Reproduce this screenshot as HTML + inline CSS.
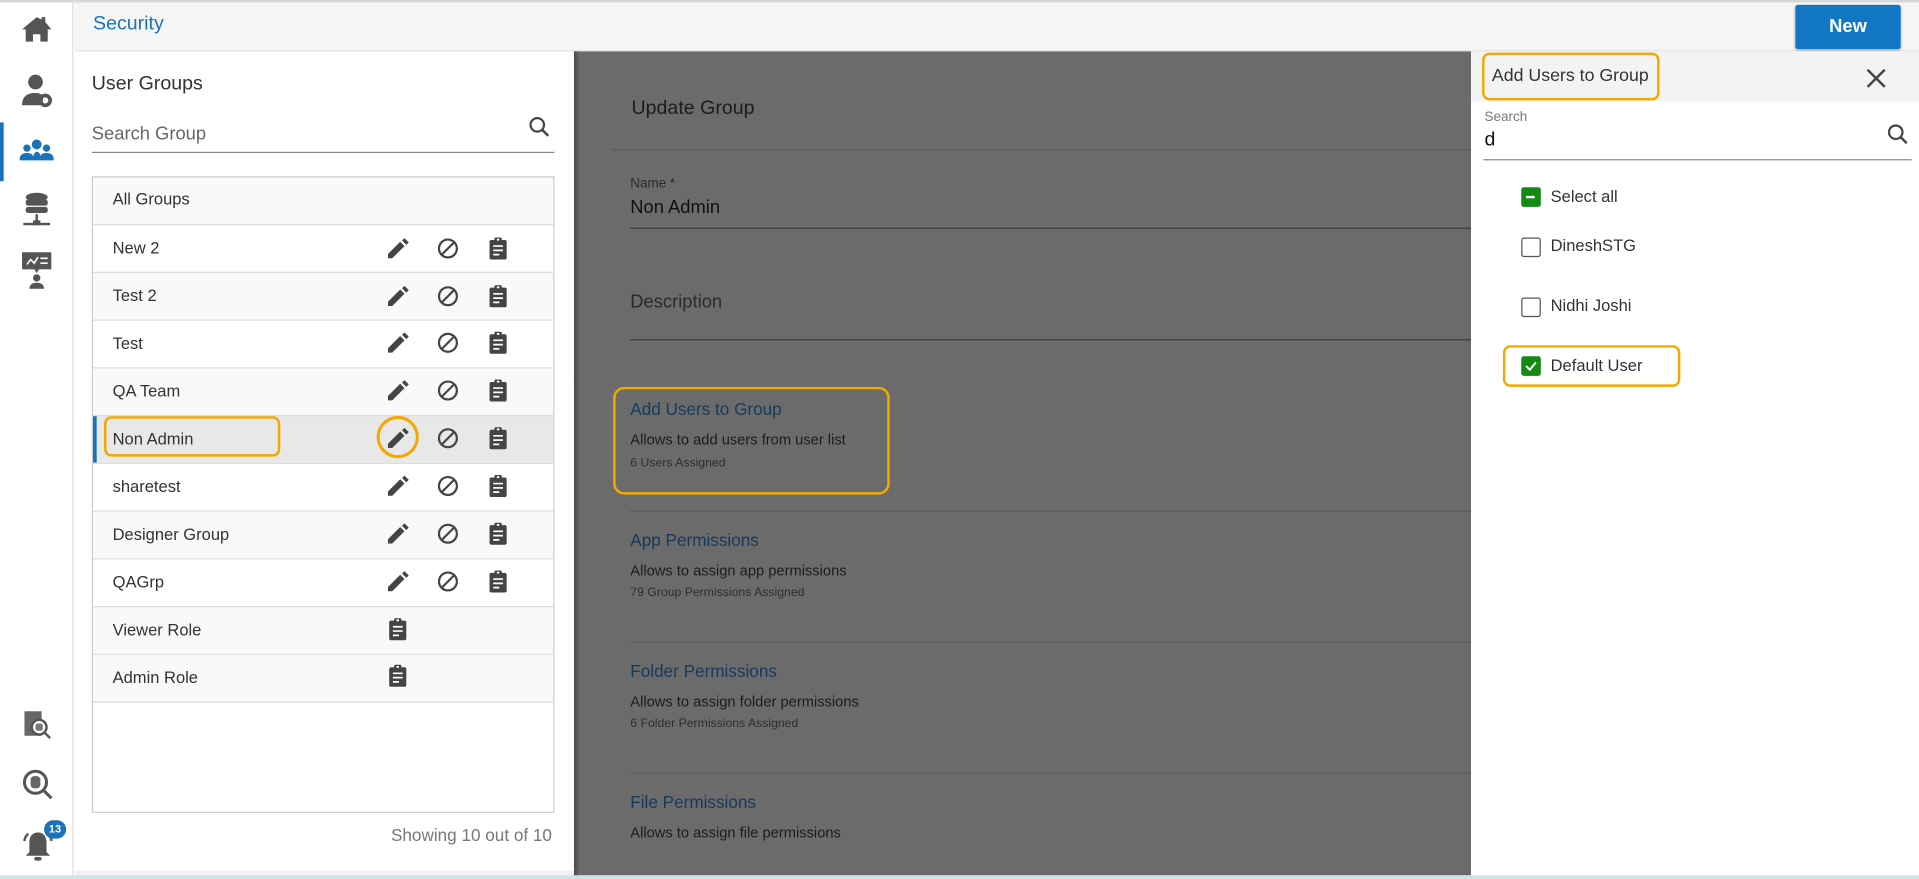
<!DOCTYPE html>
<html><head><meta charset="utf-8"><style>
*{box-sizing:border-box;margin:0;padding:0}
html,body{width:1919px;height:879px;overflow:hidden;background:#fff;font-family:"Liberation Sans",sans-serif}
#root{position:absolute;left:0;top:0;width:1568px;height:718px;transform:scale(1.22385,1.2242);transform-origin:0 0;background:#fff}
.a{position:absolute}
.t{position:absolute;white-space:nowrap}
.row{position:absolute;left:0;width:377px;height:39px;border-top:1px solid #ddd;font-size:13.5px;color:#333}
.row span{position:absolute;left:16px;top:11px}
.cb{position:absolute;left:1243px;width:16px;height:16px;border:1.5px solid #555;border-radius:2px;background:#fff}
.lbl{position:absolute;left:1267px;font-size:13.5px;color:#333}
.ob{position:absolute;border:2.5px solid #f2a900;border-radius:6px}
</style></head><body><div id="root">
<div class="a" style="left:0;top:0;width:1568px;height:2px;background:#d8d8d8"></div>
<div class="a" style="left:0;top:2px;width:60px;height:713px;background:#fff;border-right:1px solid #ddd"></div>
<div class="a" style="left:0;top:100px;width:3px;height:48px;background:#1a73b8"></div>
<svg class="a" style="left:17px;top:12px" width="26" height="24" viewBox="0 0 26 24"><path d="M13 2L1 12h3v10h6v-6h6v6h6V12h3L20 6V2h-3v2z" fill="#555"/></svg>
<svg class="a" style="left:17px;top:60px" width="26" height="28" viewBox="0 0 26 28"><circle cx="12" cy="7" r="6" fill="#555"/><path d="M1 26c0-7 4-10 11-10 3 0 5 1 6 2v8z" fill="#555"/><circle cx="20" cy="22" r="4" fill="none" stroke="#555" stroke-width="3"/></svg>
<svg class="a" style="left:16px;top:113px" width="28" height="22" viewBox="0 0 28 22"><circle cx="14" cy="5" r="4" fill="#1a73b8"/><circle cx="6" cy="8" r="3" fill="#1a73b8"/><circle cx="22" cy="8" r="3" fill="#1a73b8"/><path d="M0 18c0-5 3-6 6-6s5 1 5 3c1-3 2-4 3-4s3 1 3 4c0-2 2-3 5-3s6 1 6 6z" fill="#1a73b8"/></svg>
<svg class="a" style="left:19px;top:157px" width="22" height="30" viewBox="0 0 22 30"><ellipse cx="11" cy="4" rx="9" ry="3.5" fill="#555"/><rect x="2" y="6" width="18" height="5" rx="2" fill="#555"/><rect x="2" y="12" width="18" height="5" rx="2" fill="#555"/><rect x="10" y="18" width="2" height="6" fill="#555"/><rect x="0" y="25" width="22" height="2" fill="#555"/><rect x="8" y="23" width="6" height="4" fill="#555"/></svg>
<svg class="a" style="left:18px;top:206px" width="24" height="30" viewBox="0 0 24 30"><rect x="0" y="0" width="24" height="14" fill="#555"/><path d="M4 10l3-4 3 3 3-5M15 5h6M15 9h6" stroke="#fff" stroke-width="1.3" fill="none"/><path d="M10 14l2 3 2-3z" fill="#555"/><circle cx="12" cy="21" r="3" fill="#555"/><path d="M6 30c0-4 3-5 6-5s6 1 6 5z" fill="#555"/></svg>
<svg class="a" style="left:18px;top:580px" width="24" height="26" viewBox="0 0 24 26"><rect x="2" y="1" width="14" height="20" fill="#666"/><circle cx="14" cy="14" r="6" fill="#fff" stroke="#555" stroke-width="2"/><path d="M18 18l5 5" stroke="#555" stroke-width="2"/><rect x="11" y="11" width="6" height="6" rx="2" fill="#777"/></svg>
<svg class="a" style="left:18px;top:628px" width="26" height="26" viewBox="0 0 26 26"><circle cx="11" cy="11" r="9" fill="none" stroke="#555" stroke-width="2.5"/><path d="M17 17l7 7" stroke="#555" stroke-width="2.5"/><rect x="7" y="6" width="8" height="10" rx="3" fill="#666"/></svg>
<svg class="a" style="left:17px;top:677px" width="28" height="28" viewBox="0 0 28 28"><path d="M14 3c-5 0-7 4-7 8v8l-3 3h20l-3-3v-8c0-4-2-8-7-8z" fill="#555"/><rect x="11" y="23" width="6" height="3" rx="1.5" fill="#555"/><path d="M3 10c0-3 2-5 3-6M25 10c0-3-2-5-3-6" stroke="#555" stroke-width="2" fill="none"/></svg>
<div class="a" style="left:36px;top:670px;width:18px;height:15px;border-radius:8px;background:#1a73b8;color:#fff;font-size:9px;font-weight:bold;text-align:center;line-height:15px">13</div>
<div class="a" style="left:61px;top:2px;width:1507px;height:40px;background:#f5f5f5;border-bottom:1px solid #e2e2e2"></div>
<div class="t" style="left:76px;top:11px;font-size:16px;color:#1a73b8">Security</div>
<div class="a" style="left:1467px;top:4px;width:86px;height:36px;background:#1177c4;border-radius:2px;color:#fff;font-weight:bold;font-size:15px;text-align:center;line-height:36px;box-shadow:0 1px 2px rgba(0,0,0,.3)">New</div>
<div class="t" style="left:75px;top:60px;font-size:16px;color:#333">User Groups</div>
<div class="t" style="left:75px;top:101px;font-size:15px;color:#666">Search Group</div>
<svg class="a" style="left:432px;top:95px" width="18" height="18" viewBox="0 0 18 18"><circle cx="7" cy="7" r="5.5" fill="none" stroke="#444" stroke-width="1.8"/><path d="M11 11l5 5" stroke="#444" stroke-width="2"/></svg>
<div class="a" style="left:75px;top:124px;width:378px;height:1px;background:#888"></div>
<div class="a" style="left:75px;top:144px;width:378px;height:520px;border:1px solid #ccc;background:#fff;overflow:hidden">
 <div class="row" style="top:-1px;background:#f9f9f9;border-top:none"><span>All Groups</span></div>
 <div class="row" style="top:38px;background:#fff"><span>New 2</span></div>
 <div class="row" style="top:77px;background:#f9f9f9"><span>Test 2</span></div>
 <div class="row" style="top:116px;background:#fff"><span>Test</span></div>
 <div class="row" style="top:155px;background:#f9f9f9"><span>QA Team</span></div>
 <div class="row" style="top:194px;background:#e8e8e8"><span>Non Admin</span><div class="a" style="left:0;top:0;width:3px;height:39px;background:#1a73b8"></div></div>
 <div class="row" style="top:233px;background:#fff"><span>sharetest</span></div>
 <div class="row" style="top:272px;background:#f9f9f9"><span>Designer Group</span></div>
 <div class="row" style="top:311px;background:#fff"><span>QAGrp</span></div>
 <div class="row" style="top:350px;background:#f9f9f9"><span>Viewer Role</span></div>
 <div class="row" style="top:389px;background:#f9f9f9"><span>Admin Role</span></div>
 <div class="row" style="top:428px;background:#fff;height:100px"></div>
</div>
<svg class="a" style="left:0;top:0" width="470" height="600">
 <defs>
  <g id="pen"><path d="M-8 8l0-3.5 10-10 3.5 3.5-10 10z M3.5-6.5l2-2 3.5 3.5-2 2z" fill="#444"/></g>
  <g id="ban"><circle r="7.3" fill="none" stroke="#444" stroke-width="1.8"/><path d="M-5 5L5-5" stroke="#444" stroke-width="1.8"/></g>
  <g id="clip"><rect x="-7" y="-7" width="14" height="16" rx="1.5" fill="#444"/><rect x="-3" y="-9" width="6" height="4" rx="1" fill="#444"/><rect x="-1" y="-8" width="2" height="1.5" fill="#fff"/><path d="M-4-2h8M-4 1.5h8M-4 5h5" stroke="#fff" stroke-width="1.4"/></g>
 </defs>
 <use href="#pen" x="325" y="203"/><use href="#ban" x="366" y="203"/><use href="#clip" x="407" y="203"/>
 <use href="#pen" x="325" y="242"/><use href="#ban" x="366" y="242"/><use href="#clip" x="407" y="242"/>
 <use href="#pen" x="325" y="280"/><use href="#ban" x="366" y="280"/><use href="#clip" x="407" y="280"/>
 <use href="#pen" x="325" y="319"/><use href="#ban" x="366" y="319"/><use href="#clip" x="407" y="319"/>
 <use href="#pen" x="325" y="358"/><use href="#ban" x="366" y="358"/><use href="#clip" x="407" y="358"/>
 <use href="#pen" x="325" y="397"/><use href="#ban" x="366" y="397"/><use href="#clip" x="407" y="397"/>
 <use href="#pen" x="325" y="436"/><use href="#ban" x="366" y="436"/><use href="#clip" x="407" y="436"/>
 <use href="#pen" x="325" y="475"/><use href="#ban" x="366" y="475"/><use href="#clip" x="407" y="475"/>
 <use href="#clip" x="325" y="514"/>
 <use href="#clip" x="325" y="552"/>
 <circle cx="325" cy="357" r="16" fill="none" stroke="#f2a900" stroke-width="2.5"/>
</svg>
<div class="ob" style="left:85px;top:340px;width:144px;height:33px"></div>
<div class="t" style="right:1117px;top:674px;font-size:14px;color:#777">Showing 10 out of 10</div>
<div class="a" style="left:61px;top:711px;width:409px;height:4px;background:#f2f2f2"></div>
<div class="a" style="left:469px;top:42px;width:733px;height:673px;background:#6b6b6b"></div>
<div class="a" style="left:469px;top:42px;width:5px;height:673px;background:linear-gradient(90deg,#4a4a4a,#6b6b6b)"></div>
<div class="t" style="left:516px;top:80px;font-size:16px;color:#1c1c1c">Update Group</div>
<div class="a" style="left:500px;top:122px;width:702px;height:1px;background:#5a5a5a"></div>
<div class="t" style="left:515px;top:144px;font-size:11px;color:#2a2a2a">Name *</div>
<div class="t" style="left:515px;top:161px;font-size:15px;color:#111">Non Admin</div>
<div class="a" style="left:515px;top:186px;width:687px;height:1px;background:#3a3a3a"></div>
<div class="t" style="left:515px;top:238px;font-size:15px;color:#2a2a2a">Description</div>
<div class="a" style="left:515px;top:277px;width:687px;height:1px;background:#3a3a3a"></div>
<div class="t" style="left:515px;top:326px;font-size:14px;color:#163a5e">Add Users to Group</div>
<div class="t" style="left:515px;top:352px;font-size:12px;color:#1c1c1c">Allows to add users from user list</div>
<div class="t" style="left:515px;top:373px;font-size:10px;color:#2e2e2e">6 Users Assigned</div>
<div class="a" style="left:515px;top:417px;width:687px;height:1px;background:#5a5a5a"></div>
<div class="t" style="left:515px;top:433px;font-size:14px;color:#163a5e">App Permissions</div>
<div class="t" style="left:515px;top:459px;font-size:12px;color:#1c1c1c">Allows to assign app permissions</div>
<div class="t" style="left:515px;top:479px;font-size:10px;color:#2e2e2e">79 Group Permissions Assigned</div>
<div class="a" style="left:515px;top:524px;width:687px;height:1px;background:#5a5a5a"></div>
<div class="t" style="left:515px;top:540px;font-size:14px;color:#163a5e">Folder Permissions</div>
<div class="t" style="left:515px;top:566px;font-size:12px;color:#1c1c1c">Allows to assign folder permissions</div>
<div class="t" style="left:515px;top:586px;font-size:10px;color:#2e2e2e">6 Folder Permissions Assigned</div>
<div class="a" style="left:515px;top:631px;width:687px;height:1px;background:#5a5a5a"></div>
<div class="t" style="left:515px;top:647px;font-size:14px;color:#163a5e">File Permissions</div>
<div class="t" style="left:515px;top:673px;font-size:12px;color:#1c1c1c">Allows to assign file permissions</div>
<div class="ob" style="left:501px;top:316px;width:226px;height:88px;border-radius:9px"></div>
<div class="a" style="left:1202px;top:42px;width:366px;height:673px;background:#fff"></div>
<div class="a" style="left:1202px;top:42px;width:366px;height:41px;background:#f3f3f3"></div>
<div class="t" style="left:1219px;top:54px;font-size:14.5px;color:#333">Add Users to Group</div>
<div class="ob" style="left:1211px;top:43px;width:145px;height:39px"></div>
<svg class="a" style="left:1525px;top:56px" width="16" height="16" viewBox="0 0 16 16"><path d="M1 1l14 14M15 1L1 15" stroke="#444" stroke-width="2"/></svg>
<div class="t" style="left:1213px;top:90px;font-size:11px;color:#777">Search</div>
<div class="t" style="left:1213px;top:106px;font-size:16px;color:#111">d</div>
<svg class="a" style="left:1542px;top:101px" width="18" height="18" viewBox="0 0 18 18"><circle cx="7" cy="7" r="5.5" fill="none" stroke="#444" stroke-width="1.8"/><path d="M11 11l5 5" stroke="#444" stroke-width="2"/></svg>
<div class="a" style="left:1212px;top:130px;width:350px;height:1px;background:#888"></div>
<div class="cb" style="top:153px;background:#138a13;border-color:#138a13"><div class="a" style="left:3px;top:6px;width:7px;height:2px;background:#fff"></div></div>
<div class="lbl" style="top:153px">Select all</div>
<div class="cb" style="top:194px"></div><div class="lbl" style="top:193px">DineshSTG</div>
<div class="cb" style="top:243px"></div><div class="lbl" style="top:242px">Nidhi Joshi</div>
<div class="cb" style="top:291px;background:#138a13;border-color:#138a13"><svg class="a" style="left:1px;top:1px" width="12" height="12" viewBox="0 0 12 12"><path d="M2 6l3 3 5-6" stroke="#fff" stroke-width="1.6" fill="none"/></svg></div>
<div class="lbl" style="top:291px">Default User</div>
<div class="ob" style="left:1228px;top:282px;width:145px;height:34px"></div>
<div class="a" style="left:0;top:715px;width:1568px;height:3px;background:#cfe3e3"></div>
</div></body></html>
